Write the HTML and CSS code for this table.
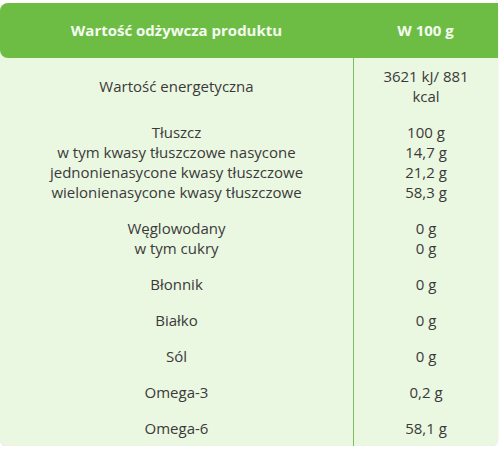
FILE: index.html
```html
<!DOCTYPE html>
<html lang="pl">
<head>
<meta charset="utf-8">
<link rel="stylesheet" href="styles.css">
</head>
<body>
<table class="nutri">
  <thead>
    <tr>
      <th class="col-name">Wartość odżywcza produktu</th>
      <th class="col-val">W 100 g</th>
    </tr>
  </thead>
  <tbody>
    <tr><td>Wartość energetyczna</td><td class="val">3621 kJ/ 881<br>kcal</td></tr>
    <tr><td>Tłuszcz<br>w tym kwasy tłuszczowe nasycone<br>jednonienasycone kwasy tłuszczowe<br>wielonienasycone kwasy tłuszczowe</td><td class="val">100 g<br>14,7 g<br>21,2 g<br>58,3 g</td></tr>
    <tr><td>Węglowodany<br>w tym cukry</td><td class="val">0 g<br>0 g</td></tr>
    <tr><td>Błonnik</td><td class="val">0 g</td></tr>
    <tr><td>Białko</td><td class="val">0 g</td></tr>
    <tr><td>Sól</td><td class="val">0 g</td></tr>
    <tr><td>Omega-3</td><td class="val">0,2 g</td></tr>
    <tr><td>Omega-6</td><td class="val">58,1 g</td></tr>
  </tbody>
</table>
</body>
</html>
```
FILE: styles.css
```css
html, body {
  margin: 0;
  padding: 0;
  background: #ffffff;
}
body {
  padding-top: 3px;
  font-family: "Open Sans", "Noto Sans", sans-serif;
  font-size: 15px;
  line-height: 20px;
  color: #3a3a3a;
}
.nutri {
  width: 498px;
  border-collapse: separate;
  border-spacing: 0;
  background: #eaf7e1;
  border-radius: 8px;
  box-shadow: 0 1px 2px rgba(0,0,0,0.12);
}
.nutri th {
  background: #6dbd45;
  color: #f4fbef;
  font-weight: 700;
  font-size: 15px;
  padding: 17px 8px 18px;
  text-align: center;
}
.nutri th.col-name {
  width: 337px;
  border-radius: 8px 0 0 8px;
}
.nutri td {
  text-align: center;
  padding: 8px 8px;
  vertical-align: middle;
}
.nutri td.val {
  border-left: 1px solid #7cbf5a;
}
.nutri tbody tr:last-child td:first-child {
  border-bottom-left-radius: 8px;
}
```
